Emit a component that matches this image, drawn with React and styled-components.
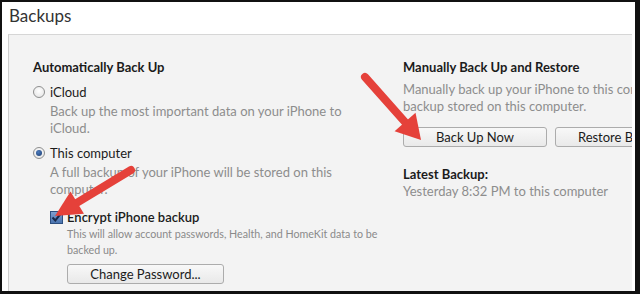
import React from "react";
import styled, { createGlobalStyle } from "styled-components";

const Global = createGlobalStyle`
  html, body { margin: 0; padding: 0; background: #fff; }
  body { font-family: "Lato", "Open Sans", sans-serif; }
  * { box-sizing: border-box; }
`;

const Page = styled.div`
  position: relative;
  width: 640px;
  height: 294px;
  overflow: hidden;
`;

const Frame = styled.div`
  width: 100%;
  height: 100%;
  border-style: solid;
  border-color: #111;
  border-width: 2px 5px 3px 2px;
  background: #fff;
  display: flex;
  flex-direction: column;
`;

const Header = styled.div`
  height: 32px;
  flex: none;
  padding-left: 7px;
`;

const Title = styled.h1`
  margin: 0;
  font-weight: 400;
  font-size: 17px;
  line-height: 28px;
  color: #333;
`;

const Panel = styled.div`
  flex: 1;
  margin: 0 3px 0 6px;
  border-left: 1px solid #cfcfcf;
  border-top: 1px solid #d6d6d6;
  background: #f3f3f3;
  display: grid;
  grid-template-columns: 370px 1fr;
  padding: 23px 0 0 24px;
  overflow: hidden;
`;

const Column = styled.div`
  display: flex;
  flex-direction: column;
  align-items: flex-start;
  min-width: 0;
`;

const Heading = styled.div`
  font-weight: 700;
  font-size: 13px;
  line-height: 18px;
  color: #1b1b1b;
  margin-top: ${(p) => p.$mt || 0}px;
`;

const OptionRow = styled.label`
  display: flex;
  align-items: center;
  gap: ${(p) => p.$gap || 5}px;
  font-size: 13px;
  line-height: 18px;
  color: #1b1b1b;
  margin-top: ${(p) => p.$mt || 0}px;
  margin-left: ${(p) => p.$ml || 0}px;
  font-weight: ${(p) => (p.$bold ? 600 : 400)};
`;

const Radio = styled.span`
  width: 12px;
  height: 12px;
  border-radius: 50%;
  border: 1px solid #8e8f8f;
  background: radial-gradient(circle at 50% 40%, #ffffff 0%, #eaeaea 70%, #dcdcdc 100%);
  display: flex;
  align-items: center;
  justify-content: center;
  flex: none;
  &::after {
    content: "";
    width: 6px;
    height: 6px;
    border-radius: 50%;
    background: ${(p) => (p.$checked ? "radial-gradient(circle at 40% 35%, #4b7bbd, #1c3b6e)" : "transparent")};
  }
`;

const CheckBox = styled.span`
  width: 13px;
  height: 13px;
  border: 1px solid #2d4f80;
  background: linear-gradient(#7f9fcf, #4a74b0);
  display: flex;
  align-items: center;
  justify-content: center;
  flex: none;
`;

const Desc = styled.div`
  font-size: 13px;
  line-height: 17px;
  color: #8d8d8d;
  margin-top: ${(p) => p.$mt || 0}px;
  margin-left: ${(p) => p.$ml || 0}px;
  white-space: nowrap;
`;

const SmallDesc = styled.div`
  font-size: 10.7px;
  line-height: 16px;
  color: #8a8a8a;
  margin-left: 34px;
  white-space: nowrap;
`;

const Button = styled.button`
  height: 20px;
  width: ${(p) => p.$w}px;
  flex: none;
  padding: 0;
  border: 1px solid #acacac;
  border-radius: 3px;
  background: linear-gradient(#f8f8f8, #e9e9e9);
  font-family: "Lato", "Open Sans", sans-serif;
  font-size: 13px;
  color: #1b1b1b;
  margin-left: ${(p) => p.$ml || 0}px;
  white-space: nowrap;
  overflow: hidden;
`;

const ButtonRow = styled.div`
  display: flex;
  gap: 8px;
  margin-top: ${(p) => p.$mt}px;
`;

const ArrowLayer = styled.svg`
  position: absolute;
  left: 0;
  top: 0;
  pointer-events: none;
`;

function Arrow({ tail, tip, head = 26, half = 13, width = 8, color = "#e5413a" }) {
  const dx = tip[0] - tail[0];
  const dy = tip[1] - tail[1];
  const len = Math.hypot(dx, dy);
  const ux = dx / len;
  const uy = dy / len;
  const nx = uy;
  const ny = -ux;
  const bx = tip[0] - head * ux;
  const by = tip[1] - head * uy;
  const w1 = [bx + half * nx, by + half * ny];
  const w2 = [bx - half * nx, by - half * ny];
  return (
    <g>
      <line
        x1={tail[0]}
        y1={tail[1]}
        x2={bx + 2 * ux}
        y2={by + 2 * uy}
        stroke={color}
        strokeWidth={width}
        strokeLinecap="round"
      />
      <polygon points={`${tip[0]},${tip[1]} ${w1[0]},${w1[1]} ${w2[0]},${w2[1]}`} fill={color} />
    </g>
  );
}

export default function App() {
  return (
    <Page>
      <Global />
      <Frame>
        <Header>
          <Title>Backups</Title>
        </Header>
        <Panel>
          <Column>
            <Heading>Automatically Back Up</Heading>
            <OptionRow $mt={7}>
              <Radio />
              iCloud
            </OptionRow>
            <Desc $mt={2} $ml={17}>
              Back up the most important data on your iPhone to
              <br />
              iCloud.
            </Desc>
            <OptionRow $mt={7}>
              <Radio $checked />
              This computer
            </OptionRow>
            <Desc $mt={2} $ml={17}>
              A full backup of your iPhone will be stored on this
              <br />
              computer.
            </Desc>
            <OptionRow $mt={10} $ml={17} $gap={4} $bold>
              <CheckBox>
                <svg width="11" height="11" viewBox="0 0 11 11">
                  <path d="M1.5 5.5 L4.3 8.4 L9.6 1.8" fill="none" stroke="#17284a" strokeWidth="2" />
                </svg>
              </CheckBox>
              Encrypt iPhone backup
            </OptionRow>
            <SmallDesc>
              This will allow account passwords, Health, and HomeKit data to be
              <br />
              backed up.
            </SmallDesc>
            <ButtonRow $mt={6}>
              <Button $w={157} $ml={34}>Change Password...</Button>
            </ButtonRow>
          </Column>
          <Column>
            <Heading>Manually Back Up and Restore</Heading>
            <Desc $mt={5}>
              Manually back up your iPhone to this computer or restore a
              <br />
              backup stored on this computer.
            </Desc>
            <ButtonRow $mt={12}>
              <Button $w={144}>Back Up Now</Button>
              <Button $w={144}>Restore Backup...</Button>
            </ButtonRow>
            <Heading $mt={18}>Latest Backup:</Heading>
            <Desc>Yesterday 8:32 PM to this computer</Desc>
          </Column>
        </Panel>
      </Frame>
      <ArrowLayer width="640" height="294" viewBox="0 0 640 294">
        <Arrow tail={[365, 77]} tip={[421, 140]} head={24} half={14} />
        <Arrow tail={[131, 170]} tip={[55, 216]} head={26} half={13} />
      </ArrowLayer>
    </Page>
  );
}
